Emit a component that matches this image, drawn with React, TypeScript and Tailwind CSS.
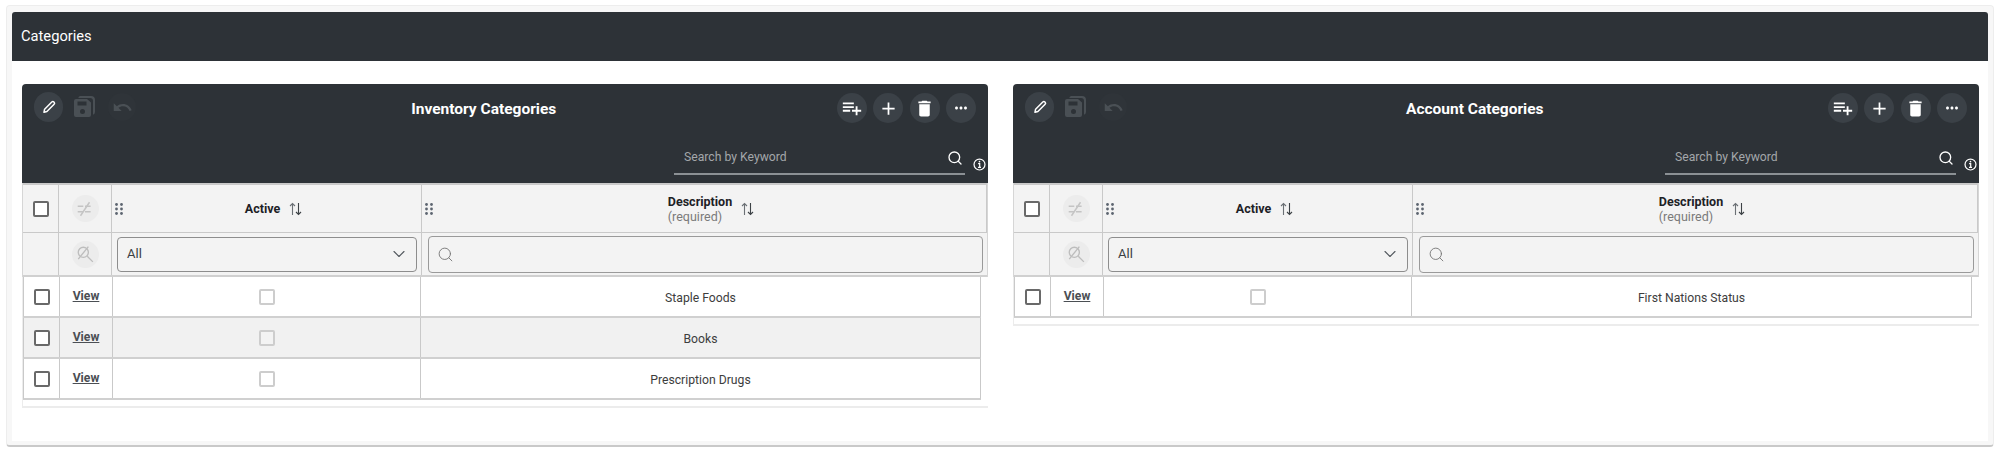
import { ReactNode } from "react";
import { ChevronDown, Search } from "lucide-react";

const ICONS = {
  playlist: "M14 10H2v2h12v-2zm0-4H2v2h12V6zm4 8v-4h-2v4h-4v2h4v4h2v-4h4v-2h-4zM2 16h8v-2H2v2z",
  add: "M19 13h-6v6h-2v-6H5v-2h6V5h2v6h6v2z",
  trash: "M6 19c0 1.1.9 2 2 2h8c1.1 0 2-.9 2-2V7H6v12zM19 4h-3.5l-1-1h-5l-1 1H5v2h14V4z",
  more: "M6 10c-1.1 0-2 .9-2 2s.9 2 2 2 2-.9 2-2-.9-2-2-2zm12 0c-1.1 0-2 .9-2 2s.9 2 2 2 2-.9 2-2-.9-2-2-2zm-6 0c-1.1 0-2 .9-2 2s.9 2 2 2 2-.9 2-2-.9-2-2-2z",
  undo: "M12.5 8c-2.65 0-5.05.99-6.9 2.6L2 7v9h9l-3.62-3.62c1.39-1.16 3.16-1.88 5.12-1.88 3.54 0 6.55 2.31 7.6 5.5l2.37-.78C21.08 11.03 17.15 8 12.5 8z",
};

function MatIcon({ d, className }: { d: string; className: string }) {
  return (
    <svg viewBox="0 0 24 24" fill="currentColor" className={className}>
      <path d={d} />
    </svg>
  );
}

function RoundButton({ children }: { children: ReactNode }) {
  return (
    <div className="flex h-[30px] w-[30px] items-center justify-center rounded-full bg-[#3b4147] text-white">
      {children}
    </div>
  );
}

function PencilIcon() {
  return (
    <svg viewBox="0 0 16 16" fill="none" stroke="currentColor" strokeWidth="1.5" className="h-4 w-4">
      <path d="M3 13.2l.6-3L10.8 3a1.5 1.5 0 0 1 2.1 0l.2.2a1.5 1.5 0 0 1 0 2.1L5.9 12.5z" strokeLinejoin="round" />
    </svg>
  );
}

function SaveIcon() {
  return (
    <svg viewBox="0 0 22 22" fill="#4a5055" className="h-[22px] w-[22px]">
      <path d="M6 0h11a4 4 0 0 1 4 4v12a3 3 0 0 1-2 2.8V5a3 3 0 0 0-3-3H4.300A2.500 2.500 0 0 1 6 0z" />
      <path fillRule="evenodd" d="M2 3h11l4 3.500V19a2 2 0 0 1-2 2H2a2 2 0 0 1-2-2V5a2 2 0 0 1 2-2zm1.500 2.500v4h9v-4zM8.500 13a2.500 2.500 0 1 0 0 5 2.500 2.500 0 0 0 0-5z" />
    </svg>
  );
}

function DragDots() {
  return (
    <svg viewBox="0 0 8 12" fill="#5d6570" className="absolute left-[3px] top-1/2 h-[12px] w-[8px] -translate-y-1/2">
      <circle cx="1.500" cy="1.500" r="1.400" />
      <circle cx="6.500" cy="1.500" r="1.400" />
      <circle cx="1.500" cy="6" r="1.400" />
      <circle cx="6.500" cy="6" r="1.400" />
      <circle cx="1.500" cy="10.500" r="1.400" />
      <circle cx="6.500" cy="10.500" r="1.400" />
    </svg>
  );
}

function SortIcon() {
  return (
    <svg viewBox="0 0 13 14" fill="none" stroke="#6b7075" strokeWidth="1.100" className="ml-[9px] h-[14px] w-[13px]">
      <path d="M3.500 13V1.500M1 4l2.500-2.500L6 4" />
      <path d="M9.500 1v11.500M7 10l2.500 2.500L12 10" stroke="#3d4246" />
    </svg>
  );
}

function InfoIcon() {
  return (
    <svg viewBox="0 0 14 14" fill="none" className="ml-2 mt-[19px] h-[13px] w-[13px] text-white" stroke="currentColor">
      <circle cx="7" cy="7" r="5.900" strokeWidth="1.300" />
      <path d="M5.500 6h1.700v4M5.400 10.200h3.200" strokeWidth="1.300" />
      <circle cx="7" cy="3.900" r="0.900" fill="currentColor" stroke="none" />
    </svg>
  );
}

function NoFilterIcon() {
  return (
    <svg viewBox="0 0 16 16" fill="none" stroke="#c4c4c4" strokeWidth="1.300" className="h-[18px] w-[18px]">
      <path d="M1.500 5.500h13M1.500 10.500h13" strokeDasharray="5 1.500" />
      <path d="M12 2L4 14" />
    </svg>
  );
}

function NoSearchIcon() {
  return (
    <svg viewBox="0 0 16 16" fill="none" stroke="#bdbdbd" strokeWidth="1.200" className="h-[18px] w-[18px]">
      <circle cx="6.500" cy="6.500" r="4.500" />
      <path d="M10 10l5 5M11 1.500L2 12.500" />
    </svg>
  );
}

function CheckBox() {
  return <div className="ml-[1px] h-4 w-4 rounded-[2px] border-2 border-[#696969] bg-white" />;
}

function HeaderCell({ title, note }: { title: string; note?: string }) {
  return (
    <div className="relative flex items-center justify-center border-r-[1px] border-[#c9c9c9] pl-[14px]">
      <DragDots />
      <div className="text-[12.500px] leading-[15px]">
        <div className="font-bold text-[#1d2126]">{title}</div>
        {note && <div className="text-[#7a7a7a]">{note}</div>}
      </div>
      <SortIcon />
    </div>
  );
}

function Panel({ title, rows }: { title: string; rows: string[] }) {
  return (
    <div className="min-w-0 flex-1">
      <div className="h-[99px] rounded-t-[4px] bg-[#2d3237]">
        <div className="flex items-start pl-3 pr-[12px] pt-2">
          <div className="flex w-[102px] items-center">
            <RoundButton>
              <PencilIcon />
            </RoundButton>
            <div className="ml-[11px]">
              <SaveIcon />
            </div>
            <div className="ml-3 flex h-[28px] w-[28px] items-center justify-center rounded-full bg-[#2f3439] text-[#4a5055]">
              <MatIcon d={ICONS.undo} className="h-[21px] w-[21px]" />
            </div>
          </div>
          <div className="flex-1 pr-[5px] pt-[7px] text-center text-[15.500px] font-bold leading-5 text-white">{title}</div>
          <div className="mt-[1px] flex gap-[6.500px]">
            <RoundButton>
              <MatIcon d={ICONS.playlist} className="h-[22px] w-[22px]" />
            </RoundButton>
            <RoundButton>
              <MatIcon d={ICONS.add} className="h-[21px] w-[21px]" />
            </RoundButton>
            <RoundButton>
              <MatIcon d={ICONS.trash} className="h-[21px] w-[21px]" />
            </RoundButton>
            <RoundButton>
              <MatIcon d={ICONS.more} className="h-[18px] w-[18px]" />
            </RoundButton>
          </div>
        </div>
        <div className="mt-[16px] flex justify-end pr-[2px]">
          <div className="flex h-[36px] w-[291px] items-center justify-between border-b-2 border-[#8b9094] pb-[1px] pl-[10px] pr-[2px] pt-[4px]">
            <span className="text-[12.200px] text-[#a3a7aa]">Search by Keyword</span>
            <Search className="h-[16px] w-[16px] text-white" strokeWidth={2} />
          </div>
          <InfoIcon />
        </div>
      </div>

      <div className="border-x border-[#d6d6d6] bg-[#f3f3f3]">
        <div className="grid h-[50px] grid-cols-[36px_53px_310px_1fr] border-y-2 border-b-[1px] border-t-[#c9c9c9] border-b-[#c9c9c9]">
          <div className="flex items-center justify-center border-r border-[#c9c9c9]">
            <CheckBox />
          </div>
          <div className="flex items-center justify-center border-r border-[#c9c9c9]">
            <div className="flex h-[27px] w-[27px] items-center justify-center rounded-full bg-[#ececec]">
              <NoFilterIcon />
            </div>
          </div>
          <HeaderCell title="Active" />
          <HeaderCell title="Description" note="(required)" />
        </div>
        <div className="grid h-[44px] grid-cols-[36px_53px_310px_1fr] border-b-2 border-[#d0d0d0]">
          <div className="border-r border-[#c9c9c9]" />
          <div className="flex items-center justify-center border-r border-[#c9c9c9]">
            <div className="flex h-[27px] w-[27px] items-center justify-center rounded-full bg-[#ececec]">
              <NoSearchIcon />
            </div>
          </div>
          <div className="flex items-center border-r border-[#c9c9c9] pl-[5px] pr-[4px]">
            <div className="flex h-[35px] w-full items-center justify-between rounded-[4px] border border-[#8d8d8d] pl-[9px] pr-[7px] text-[13px] text-[#3a3f44]">
              All
              <ChevronDown className="h-[20px] w-[20px] text-[#50565c]" strokeWidth={1.300} />
            </div>
          </div>
          <div className="flex items-center pl-[6px] pr-[4px]">
            <div className="flex h-[37px] w-full items-center rounded-[4px] border border-[#9a9a9a] pl-[8px]">
              <Search className="h-[17px] w-[17px] text-[#777]" strokeWidth={1.300} />
            </div>
          </div>
        </div>
      </div>

      <div className="border-b-2 border-l border-[#ececec] pb-[6px]">
        {rows.map((row, i) => (
          <div
            key={row}
            className={`grid h-[41px] w-[958px] grid-cols-[36px_53px_308px_1fr] border-x border-b-2 border-x-[#c9c9c9] border-b-[#d0d0d0] text-[12.200px] text-[#3d3d3d] ${
              i % 2 === 1 ? "bg-[#f1f1f1]" : "bg-white"
            }`}
          >
            <div className="flex items-center justify-center border-r border-[#c9c9c9]">
              <CheckBox />
            </div>
            <div className="flex items-center justify-center border-r border-[#c9c9c9]">
              <span className="font-bold text-[#4b4f54] underline">View</span>
            </div>
            <div className="flex items-center justify-center border-r border-[#c9c9c9]">
              <div className={`h-4 w-4 rounded-[2px] border-2 border-[#cdcdcd] ${i % 2 === 1 ? "bg-[#f3f3f3]" : "bg-white"}`} />
            </div>
            <div className="flex items-center justify-center pt-[3px]">{row}</div>
          </div>
        ))}
      </div>
    </div>
  );
}

export default function App() {
  return (
    <div className="h-[450px] bg-white pb-[3px] pl-[6px] pr-[6px] pt-[5px] font-['Roboto',sans-serif]">
      <div className="h-[442px] rounded-[4px] border-b-[2px] border-l-[1px] border-r-[1px] border-t-[1px] border-[#ededed] border-b-[#c9c9c9] bg-[#f7f7f7] px-[5px] pt-[6px]">
        <div className="flex h-[49px] items-center rounded-t-[3px] bg-[#2d3237] pl-[9px] text-[14.700px] text-white">
          Categories
        </div>
        <div className="flex h-[380px] items-start gap-[25px] bg-white pl-[10px] pr-[9px] pt-[23px]">
          <Panel title="Inventory Categories" rows={["Staple Foods", "Books", "Prescription Drugs"]} />
          <Panel title="Account Categories" rows={["First Nations Status"]} />
        </div>
      </div>
    </div>
  );
}
